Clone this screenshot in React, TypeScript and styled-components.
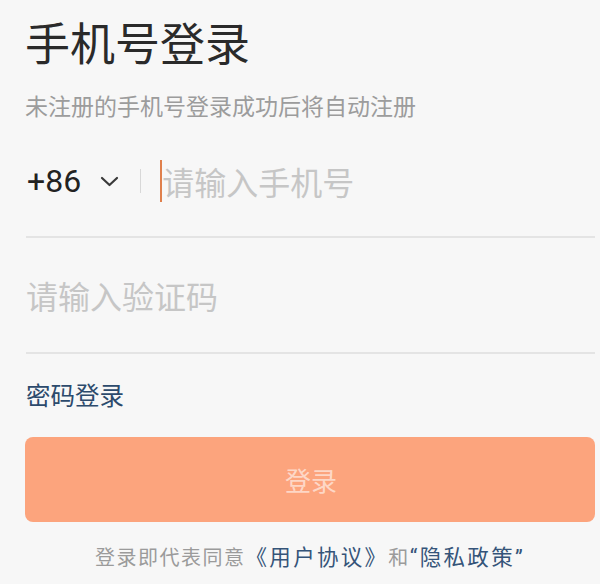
import React from "react";
import styled, { createGlobalStyle } from "styled-components";

const Global = createGlobalStyle`
  html, body { margin: 0; padding: 0; background: #f7f7f7; }
  body { font-family: Roboto, "Noto Sans CJK SC", sans-serif; }
  * { box-sizing: border-box; }
`;

const Page = styled.div`
  width: 600px;
  height: 584px;
  padding: 0 5px 0 25px;
  background: #f7f7f7;
  display: flex;
  flex-direction: column;
  overflow: hidden;
`;

const Title = styled.h1`
  margin: 0;
  font-size: 45px;
  font-weight: 400;
  line-height: 92px;
  color: #2a2a2a;
  letter-spacing: 0;
`;

const Subtitle = styled.p`
  margin: 0;
  font-size: 23px;
  line-height: 32px;
  color: #9c9c9c;
`;

const Field = styled.div<{ $h: number; $mt?: number }>`
  display: flex;
  align-items: center;
  height: ${(p) => p.$h}px;
  margin-top: ${(p) => p.$mt ?? 0}px;
  margin-left: 1px;
  border-bottom: 2px solid #e4e4e4;
`;

const Code = styled.span`
  font-size: 32px;
  color: #222;
  padding-left: 1px;
`;

const Chevron = styled.svg`
  margin-left: 19px;
  width: 19px;
  height: 11px;
  flex: none;
`;

const Divider = styled.span`
  width: 1px;
  height: 24px;
  background: #d8d8d8;
  margin-left: 21px;
  flex: none;
`;

const Caret = styled.span`
  width: 2px;
  height: 42px;
  background: #e0804c;
  margin-left: 19px;
  flex: none;
`;

const Input = styled.input`
  flex: 1;
  min-width: 0;
  border: none;
  outline: none;
  background: transparent;
  padding: 0;
  font-family: "Noto Sans CJK SC", sans-serif;
  font-size: 32px;
  color: #222;
  &::placeholder {
    color: #c6c6c6;
  }
`;

const SwitchLink = styled.a`
  margin-top: 28px;
  margin-left: 1px;
  font-size: 24.5px;
  line-height: 30px;
  color: #2c4a6c;
  text-decoration: none;
  align-self: flex-start;
`;

const LoginButton = styled.button`
  margin-top: 25px;
  height: 85px;
  width: 570px;
  border: none;
  border-radius: 8px;
  background: #fca47d;
  color: rgba(255, 255, 255, 0.58);
  font-family: "Noto Sans CJK SC", sans-serif;
  font-size: 26px;
  padding: 0;
  padding-left: 2px;
`;

const Footer = styled.p`
  margin: 21px 0 0;
  font-size: 20px;
  line-height: 30px;
  color: #9b9b9b;
  text-align: center;
  letter-spacing: 1.5px;
  white-space: nowrap;
`;

const Link = styled.span`
  color: #355479;
  font-size: 21.5px;
  letter-spacing: 2.3px;
`;

export default function App() {
  return (
    <Page>
      <Global />
      <Title>手机号登录</Title>
      <Subtitle>未注册的手机号登录成功后将自动注册</Subtitle>
      <Field $h={112} $mt={2}>
        <Code>+86</Code>
        <Chevron viewBox="0 0 19 11" fill="none">
          <polyline
            points="2,2 9.5,9 17,2"
            stroke="#3a3a3a"
            strokeWidth="2.2"
            strokeLinecap="round"
            strokeLinejoin="round"
          />
        </Chevron>
        <Divider />
        <Caret />
        <Input placeholder="请输入手机号" />
      </Field>
      <Field $h={116}>
        <Input placeholder="请输入验证码" />
      </Field>
      <SwitchLink>密码登录</SwitchLink>
      <LoginButton>登录</LoginButton>
      <Footer>
        登录即代表同意<Link>《用户协议》</Link>和<Link>“隐私政策”</Link>
      </Footer>
    </Page>
  );
}
